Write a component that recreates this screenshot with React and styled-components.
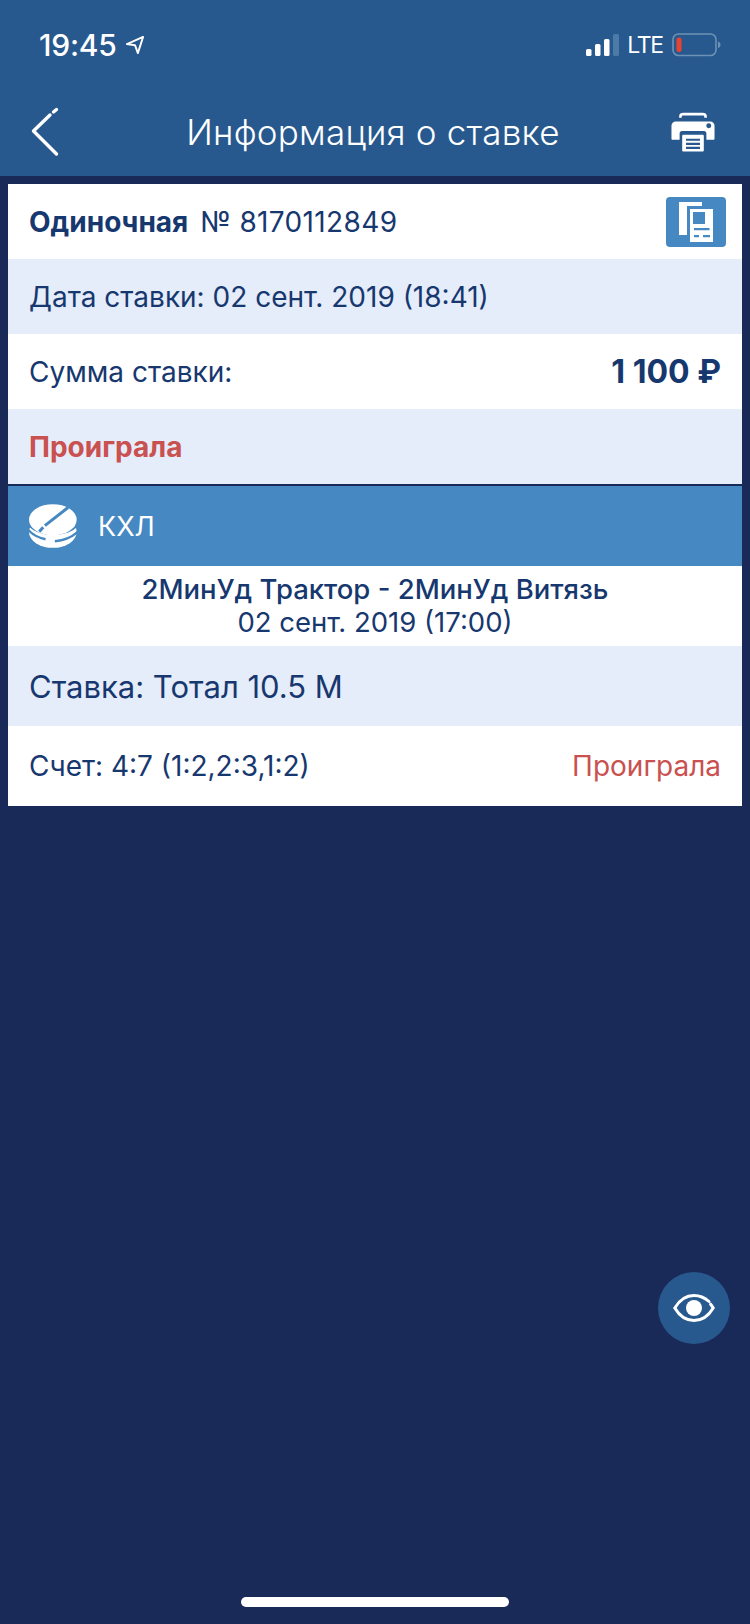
import React from "react";
import styled, { createGlobalStyle } from "styled-components";

const Global = createGlobalStyle`
  html, body { margin: 0; padding: 0; background: #192a58; }
  * { box-sizing: border-box; }
`;

const Screen = styled.div`
  position: relative;
  width: 750px;
  height: 1624px;
  background: #192a58;
  font-family: Inter, "Noto Sans", sans-serif;
  color: #17386f;
  overflow: hidden;
`;

const Header = styled.header`
  height: 176px;
  background: #27598e;
  color: #fff;
  display: flex;
  flex-direction: column;
`;

const StatusBar = styled.div`
  height: 88px;
  padding: 2px 29px 0 39px;
  display: flex;
  align-items: center;
  justify-content: space-between;
`;

const Time = styled.div`
  display: flex;
  align-items: center;
  gap: 8px;
  font-size: 30px;
  font-weight: 500;
  letter-spacing: -0.2px;
`;

const StatusRight = styled.div`
  display: flex;
  align-items: center;
`;

const Lte = styled.span`
  margin: 0 9px 0 8px;
  font-size: 23px;
  font-weight: 400;
  letter-spacing: -1.2px;
`;

const NavBar = styled.div`
  flex: 1;
  padding: 0 35px 0 31px;
  display: grid;
  grid-template-columns: 1fr auto 1fr;
  align-items: center;
`;

const Title = styled.h1`
  margin: 0;
  font-size: 35px;
  font-weight: 300;
  letter-spacing: 0.2px;
`;

const NavEnd = styled.div`
  display: flex;
  justify-content: flex-end;
`;

const Card = styled.section`
  margin: 8px 8px 0;
  display: flex;
  flex-direction: column;
`;

const Row = styled.div`
  height: ${(p) => p.$h || 75}px;
  padding: 0 21px;
  background: ${(p) => (p.$tint ? "#e5ecfa" : "#fff")};
  display: flex;
  align-items: center;
  justify-content: space-between;
  font-size: ${(p) => p.$size || 28}px;
`;

const Number = styled.span`
  display: flex;
  gap: 12px;
  align-items: baseline;
`;

const Strong = styled.strong`
  font-weight: 700;
`;

const Digits = styled.span`
  letter-spacing: 0.35px;
`;

const Amount = styled.strong`
  font-size: 32px;
  font-weight: 700;
`;

const Lost = styled.span`
  color: #c9514f;
  font-weight: ${(p) => (p.$bold ? 700 : 400)};
`;

const CopyButton = styled.div`
  width: 60px;
  height: 50px;
  margin-right: -5px;
  border-radius: 4px;
  background: #4588c2;
  display: flex;
  align-items: center;
  justify-content: center;
`;

const Divider = styled.div`
  height: 2px;
  background: #192a58;
`;

const LeagueBar = styled.div`
  height: 80px;
  padding: 0 21px;
  background: #4588c2;
  color: #fff;
  display: flex;
  align-items: center;
  gap: 21px;
  font-size: 27px;
`;

const Match = styled.div`
  height: 80px;
  background: #fff;
  display: flex;
  flex-direction: column;
  align-items: center;
  justify-content: center;
  font-size: 27.5px;
  line-height: 33px;
`;

const MatchName = styled.div`
  font-weight: 500;
`;

const EyeButton = styled.div`
  position: absolute;
  left: 658px;
  top: 1272px;
  width: 72px;
  height: 72px;
  border-radius: 50%;
  background: #27598e;
  display: flex;
  align-items: center;
  justify-content: center;
`;

const HomeBar = styled.div`
  position: absolute;
  left: 241px;
  top: 1597px;
  width: 268px;
  height: 10px;
  border-radius: 5px;
  background: #fff;
`;

const Signal = () => (
  <svg width="33" height="22" viewBox="0 0 33 22">
    <rect x="0" y="15" width="5.500" height="7" rx="1.500" fill="#fff" />
    <rect x="9" y="10" width="5.500" height="12" rx="1.500" fill="#fff" />
    <rect x="18" y="5" width="5.500" height="17" rx="1.500" fill="#fff" />
    <rect x="27" y="0" width="6" height="22" rx="1.500" fill="#4b7ba6" />
  </svg>
);

const Battery = () => (
  <svg width="49" height="24" viewBox="0 0 49 24">
    <rect x="1" y="1" width="43" height="21.500" rx="5.500" fill="none" stroke="#6d92b5" strokeWidth="1.600" />
    <rect x="4.500" y="4.500" width="5" height="14.500" rx="2" fill="#e8432e" />
    <path d="M46 8.500c1.600.4 2.500 1.600 2.500 3.200s-.9 2.800-2.500 3.200z" fill="#6d92b5" />
  </svg>
);

const Locator = () => (
  <svg width="20" height="20" viewBox="0 0 21 21" fill="none" stroke="#fff" strokeWidth="2" strokeLinejoin="round">
    <path d="M19 2 2 9.500l8.500 1.200L13.500 19z" />
  </svg>
);

const Back = () => (
  <svg width="28" height="50" viewBox="0 0 28 50" fill="none" stroke="#fff" strokeWidth="3.400" strokeLinecap="round" strokeLinejoin="round">
    <path d="M25.500 47 2.500 24 19 8" />
    <path d="M22.500 5 25.500 2.500" />
  </svg>
);

const Printer = () => (
  <svg width="44" height="42" viewBox="0 0 46 42">
    <path fillRule="evenodd" fill="#fff" d="M8.500 4.500C8.500 2 10.500 1 13 1h20c2.500 0 4.500 1 4.500 3.500V6H34.800V5c0-.8-.6-1.200-1.500-1.200H12.700c-.9 0-1.500.4-1.500 1.200v1H8.500z" />
    <path fill="#fff" d="M5 10h36c2.500 0 4.500 2 4.500 4.500V28c0 .8-.6 1.200-1.200 1.200H37V22.500C37 21 36 20 34.500 20h-23C10 20 9 21 9 22.500v6.700H1.700C1 29.200.5 28.800.5 28V14.500C.5 12 2.500 10 5 10z" />
    <circle cx="39.500" cy="14.500" r="2.600" fill="#27598e" />
    <path fillRule="evenodd" fill="#fff" d="M13 24h20c.8 0 1.300.5 1.300 1.300V40c0 .8-.5 1.300-1.300 1.300H13c-.8 0-1.300-.5-1.300-1.300V25.300c0-.8.5-1.300 1.300-1.300zm2.700 4v2.200h14.600V28zm0 4.300v2.200h14.600v-2.200zm0 4.200v2.200h14.600v-2.200z" />
  </svg>
);

const CopyIcon = () => (
  <svg width="34" height="40" viewBox="0 0 34 40">
    <path fill="#fff" d="M0 0h23v4H8v29H0z" />
    <path fillRule="evenodd" fill="#fff" d="M11 7h23v33H11zM14 10v12h12V10zM15 26v2.200h15.500V26zm0 7v2.200h5V33zm9 0v2.200h7V33z" />
  </svg>
);

const Puck = () => (
  <svg width="48" height="44" viewBox="0 0 145 132">
    <ellipse cx="72" cy="84" rx="72" ry="48" fill="#fff" />
    <path d="M-2 60C20 98 125 100 147 60" fill="none" stroke="#4588c2" strokeWidth="7" />
    <path d="M78 112C105 110 130 100 147 84" fill="none" stroke="#4588c2" strokeWidth="7" />
    <path d="M-2 78C10 92 30 102 50 106" fill="none" stroke="#4588c2" strokeWidth="7" />
    <ellipse cx="72" cy="47" rx="72" ry="47" fill="#fff" />
    <path d="M118 10 48 65M43 70 31 83" fill="none" stroke="#4588c2" strokeWidth="9" />
  </svg>
);

const Eye = () => (
  <svg width="42" height="28" viewBox="0 0 42 28" fill="none">
    <path d="M36 7.500C31.500 3.500 26.500 1.500 21 1.500 13 1.500 6.500 6 1.800 14 6.500 22 13 26.500 21 26.500S35.500 22 40.200 14c-.8-1.400-1.600-2.600-2.600-3.800" stroke="#fff" strokeWidth="3" strokeLinecap="round" />
    <circle cx="21" cy="14" r="8" fill="#fff" />
  </svg>
);

export default function App() {
  return (
    <Screen>
      <Global />
      <Header>
        <StatusBar>
          <Time>
            19:45
            <Locator />
          </Time>
          <StatusRight>
            <Signal />
            <Lte>LTE</Lte>
            <Battery />
          </StatusRight>
        </StatusBar>
        <NavBar>
          <Back />
          <Title>Информация о ставке</Title>
          <NavEnd>
            <Printer />
          </NavEnd>
        </NavBar>
      </Header>
      <Card>
        <Row>
          <Number>
            <Strong>Одиночная</Strong>
            <Digits>№ 8170112849</Digits>
          </Number>
          <CopyButton>
            <CopyIcon />
          </CopyButton>
        </Row>
        <Row $tint>Дата ставки: 02 сент. 2019 (18:41)</Row>
        <Row>
          <span>Сумма ставки:</span>
          <Amount>1 100 ₽</Amount>
        </Row>
        <Row $tint>
          <Lost $bold>Проиграла</Lost>
        </Row>
        <Divider />
        <LeagueBar>
          <Puck />
          <span>КХЛ</span>
        </LeagueBar>
        <Match>
          <MatchName>2МинУд Трактор - 2МинУд Витязь</MatchName>
          <div>02 сент. 2019 (17:00)</div>
        </Match>
        <Row $tint $h={80} $size={31}>Ставка: Тотал 10.5 М</Row>
        <Row $h={80}>
          <span>Счет: 4:7 (1:2,2:3,1:2)</span>
          <Lost>Проиграла</Lost>
        </Row>
      </Card>
      <EyeButton>
        <Eye />
      </EyeButton>
      <HomeBar />
    </Screen>
  );
}
